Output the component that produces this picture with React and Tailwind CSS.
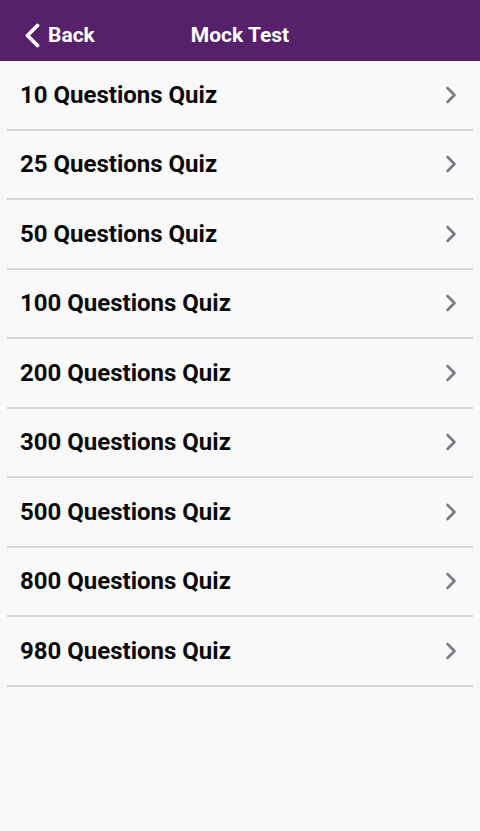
import React from "react";

const quizzes = [10, 25, 50, 100, 200, 300, 500, 800, 980];

function ChevronRight() {
  return (
    <svg width="12" height="18" viewBox="0 0 12 18" fill="none">
      <path d="M2.5 2 L9.5 9 L2.5 16" stroke="#7b7b86" strokeWidth="2.6" strokeLinecap="round" strokeLinejoin="round" />
    </svg>
  );
}

export default function App() {
  return (
    <div className="min-h-[831px] w-[480px] bg-[#f9f9f9] font-['Roboto',sans-serif]">
      <div className="relative flex h-[61px] items-center bg-[#56206a] pt-[10px] text-white">
        <button className="flex items-center pl-[24px] text-[21px] font-bold">
          <svg width="17" height="25" viewBox="0 0 17 25" fill="none" className="mr-[7px]">
            <path d="M13.5 2.5 L3.5 12.5 L13.5 22.5" stroke="white" strokeWidth="3.8" strokeLinecap="round" strokeLinejoin="round" />
          </svg>
          Back
        </button>
        <h1 className="absolute left-1/2 top-[10px] flex h-[51px] -translate-x-1/2 items-center text-[21px] font-bold">Mock Test</h1>
      </div>
      <ul>
        {quizzes.map((n) => (
          <li key={n} className="mx-[7px] flex h-[69.5px] items-center justify-between border-b-2 border-[#d6d6d6] pl-[13px] pr-[16px]">
            <span className="text-[24px] font-bold text-[#0a0a0a]">{n} Questions Quiz</span>
            <ChevronRight />
          </li>
        ))}
      </ul>
    </div>
  );
}
